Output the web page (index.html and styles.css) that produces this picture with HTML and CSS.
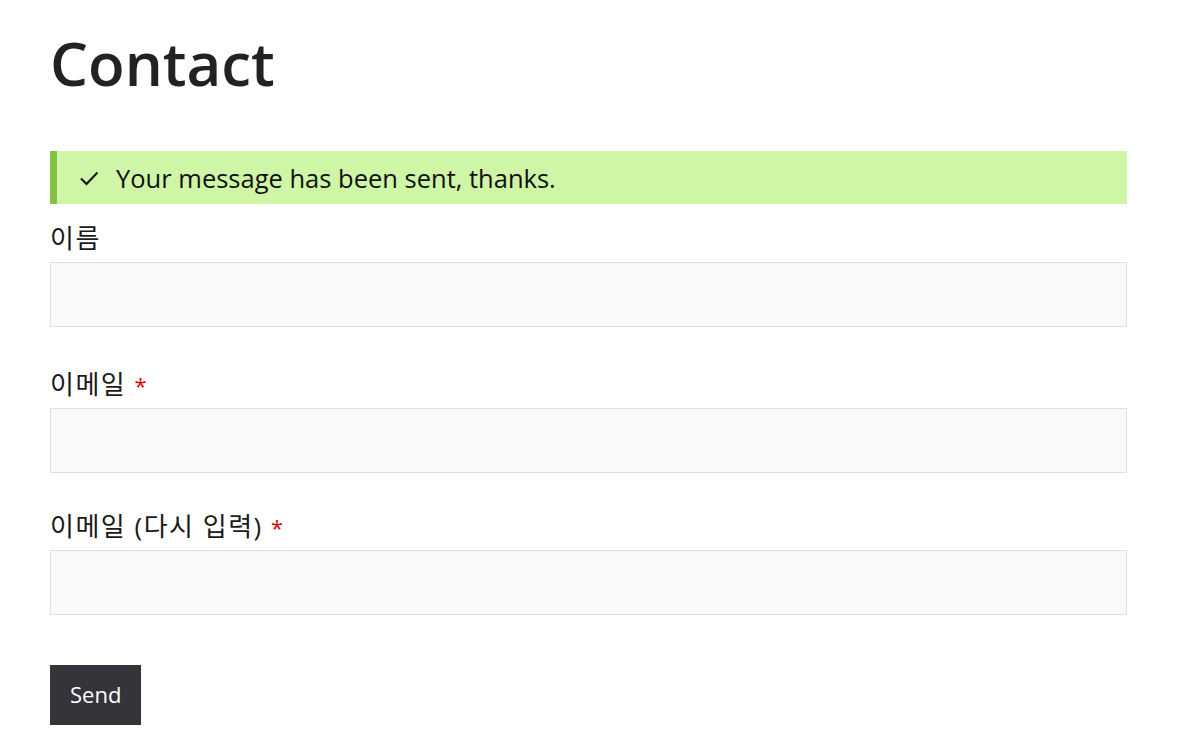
FILE: index.html
```html
<!DOCTYPE html>
<html lang="ko">
<head>
<meta charset="utf-8">
<title>Contact</title>
<link rel="stylesheet" href="styles.css">
</head>
<body>
<main class="page">
  <h1 class="title">Contact</h1>
  <div class="notice">
    <svg class="notice-icon" width="20" height="16" viewBox="0 0 20 16" aria-hidden="true">
      <path d="M2 8.5 L7.5 14 L18.5 2.5" fill="none" stroke="#111" stroke-width="2"/>
    </svg>
    <span class="notice-text">Your message has been sent, thanks.</span>
  </div>
  <form class="form">
    <div class="field field-first">
      <label class="label">이름</label>
      <input class="input" type="text">
    </div>
    <div class="field">
      <label class="label">이메일 <span class="req">*</span></label>
      <input class="input" type="email">
    </div>
    <div class="field field-last">
      <label class="label">이메일 (다시 입력) <span class="req">*</span></label>
      <input class="input" type="email">
    </div>
    <button class="button" type="button">Send</button>
  </form>
</main>
</body>
</html>
```
FILE: styles.css
```css
html, body {
  margin: 0;
  padding: 0;
  background: #ffffff;
}
body {
  font-family: "Open Sans", "Noto Sans CJK KR", sans-serif;
  color: #1a1a1a;
}
.page {
  padding: 0 50px;
}
.title {
  margin: 0;
  padding-top: 23px;
  height: 80px;
  font-size: 60px;
  line-height: 80px;
  font-weight: 600;
  color: #222222;
}
.notice {
  margin-top: 48px;
  height: 53px;
  box-sizing: border-box;
  background: #cff5a6;
  border-left: 7px solid #84c245;
  display: flex;
  align-items: center;
  padding-left: 22px;
}
.notice-icon {
  flex: none;
  margin-right: 17px;
  margin-top: 0;
}
.notice-text {
  font-size: 25.5px;
  line-height: 34px;
  color: #111111;
}
.form {
  display: flex;
  flex-direction: column;
  align-items: flex-start;
}
.field {
  width: 100%;
  display: flex;
  flex-direction: column;
  margin-top: 40px;
}
.field-first {
  margin-top: 17px;
}
.field-last {
  margin-top: 36px;
}
.label {
  display: block;
  height: 34px;
  overflow: visible;
  white-space: nowrap;
  font-family: "Open Sans", "Noto Sans CJK KR", sans-serif;
  font-size: 26px;
  letter-spacing: 1.5px;
  line-height: 34px;
  margin-bottom: 7px;
  color: #1a1a1a;
}
.req {
  color: #dd0000;
  font-family: "Open Sans", sans-serif;
  font-size: 22px;
  letter-spacing: 0;
  line-height: 34px;
}
.input {
  width: 100%;
  height: 65px;
  box-sizing: border-box;
  background: #f9f9f9;
  border: 1px solid #e0e0e0;
  border-radius: 0;
  margin: 0;
}
.button {
  margin-top: 50px;
  height: 60px;
  padding: 0 20px 3px;
  background: #35343a;
  color: #ffffff;
  border: none;
  border-radius: 0;
  font-family: "Open Sans", sans-serif;
  font-size: 22px;
}
```
